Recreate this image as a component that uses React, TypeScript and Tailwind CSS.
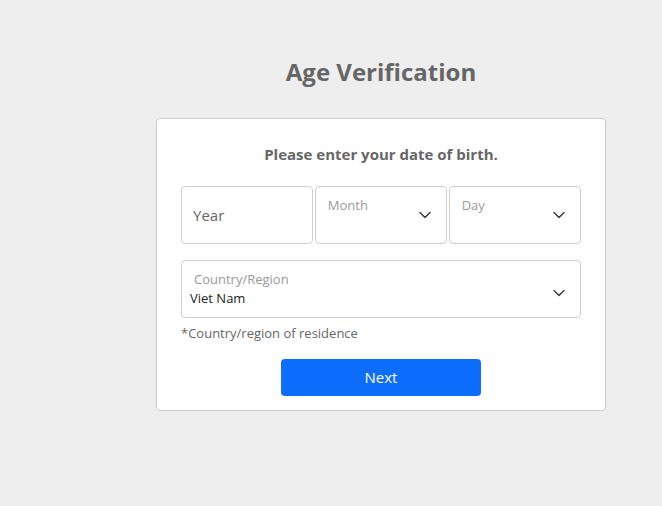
import { ChevronDown } from "lucide-react";

const font = { fontFamily: '"Open Sans", "Noto Sans", sans-serif' };

const Chevron = () => (
  <ChevronDown className="shrink-0 self-center text-[#333]" size={20} strokeWidth={1.6} />
);

const SelectBox = ({ label }: { label: string }) => (
  <div className="flex h-[58px] justify-between rounded-[4px] border border-[#cfcfcf] bg-white pl-[12px] pr-[11px]">
    <span className="pt-[8px] text-[13px] leading-[20px] text-[#9a9a9a]">{label}</span>
    <Chevron />
  </div>
);

export default function App() {
  return (
    <div className="min-h-[506px] w-full bg-[#eeeeee]" style={font}>
      <div className="ml-[156px] w-[450px] pt-[54px]">
        <h1 className="text-center text-[24px] font-bold leading-[36px] text-[#666666]">
          Age Verification
        </h1>
        <div className="mt-[28px] rounded-[4px] border border-[#cdcdcd] bg-white px-[24px] pb-[14px] pt-[24px]">
          <p className="text-center text-[15px] font-bold leading-[22px] text-[#666666]">
            Please enter your date of birth.
          </p>
          <div className="mt-[21px] grid grid-cols-3 gap-[1.5px]">
            <div className="flex h-[58px] items-center rounded-[4px] border border-[#cfcfcf] bg-white px-[11px]">
              <span className="text-[15px] text-[#666666]">Year</span>
            </div>
            <SelectBox label="Month" />
            <SelectBox label="Day" />
          </div>
          <div className="mt-[16px] flex h-[58px] items-start justify-between rounded-[4px] border border-[#cfcfcf] bg-white pl-[8px] pr-[11px] pt-[8px]">
            <div className="flex flex-col text-[13px] leading-[20px]">
              <span className="pl-[4px] text-[#9a9a9a]">Country/Region</span>
              <span className="-mt-[1px] text-[#222222]">Viet Nam</span>
            </div>
            <Chevron />
          </div>
          <p className="mt-[5px] text-[13px] leading-[20px] text-[#666666]">
            *Country/region of residence
          </p>
          <div className="mt-[16px] flex justify-center">
            <button className="h-[37px] w-[200px] rounded-[4px] bg-[#0d6efd] text-[15px] text-white">
              Next
            </button>
          </div>
        </div>
      </div>
    </div>
  );
}
